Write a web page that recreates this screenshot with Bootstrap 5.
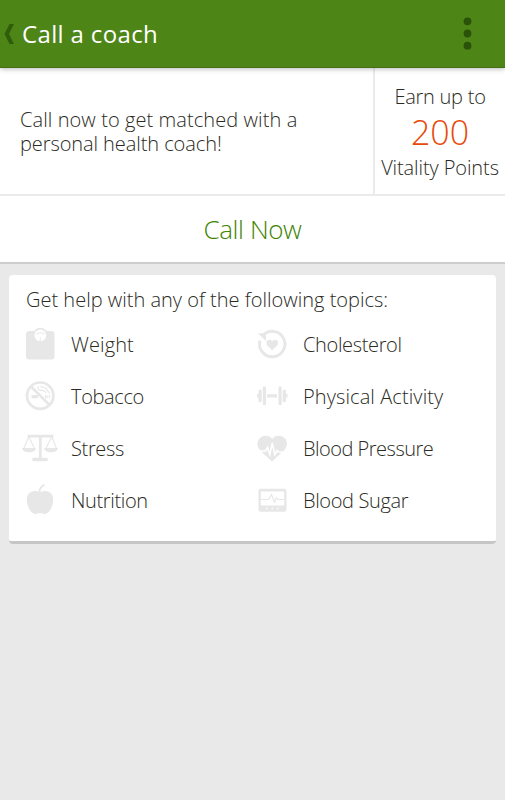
<!DOCTYPE html>
<html lang="en">
<head>
<meta charset="utf-8">
<meta name="viewport" content="width=device-width, initial-scale=1">
<title>Call a coach</title>
<link rel="stylesheet" href="https://cdn.jsdelivr.net/npm/bootstrap@5.3.0/dist/css/bootstrap.min.css">
<style>
body{background:#e9e9e9;color:#2b2b24;font-family:"Open Sans","Noto Sans",sans-serif;font-weight:300;font-size:20px;line-height:24px;min-height:100vh;overflow:hidden}
.app-bar{height:68px;background:#4e8517;color:#fff;border-bottom:1px solid #427013;box-shadow:0 1px 5px rgba(0,0,0,.28);position:relative;z-index:1}
.app-title{font-size:24px;font-weight:400;letter-spacing:.35px;line-height:32px;margin-left:7px}
.intro{height:128px;border-bottom:2px solid #ebebeb}
.intro-copy{padding:2px 0 0 20px}
.copy-a{font-size:20px;letter-spacing:.08px}
.copy-b{font-size:20px;letter-spacing:-.08px}
.copy-a,.copy-b,.points span{line-height:24px}
.points{width:132px;border-left:2px solid #ebebeb;padding-top:2px}
.points-a{letter-spacing:-.25px}
.points-b{letter-spacing:-.1px}
.points .points-num{color:#e84a0c;font-size:34px;line-height:47px}
.call-btn{height:68px;border-bottom:2px solid #cdcdcd;color:#3f8404;font-size:26px;font-weight:300;letter-spacing:-.4px}
.topics{margin:11px 9px 0;height:269px;border:0;border-bottom:3px solid #c6c6c6;border-radius:4px;color:inherit}
.topics-title{padding:13px 0 0 17px;height:43px;font-size:20px;font-weight:300;line-height:24px;margin:0}
.topic-grid{display:grid;grid-template-columns:232px 1fr;grid-auto-rows:52.25px;padding-left:13px}
.topic svg{width:36px;height:36px;margin-right:13px;flex:none;color:#e7e7e7}
.topic span{padding-top:1px}
.snug{letter-spacing:-.35px}
.snugger{letter-spacing:-.5px}
.airy{letter-spacing:.1px}
</style>
</head>
<body>
<header class="app-bar d-flex align-items-center">
  <a href="#" class="d-flex align-items-center text-reset text-decoration-none" aria-label="Back">
    <svg width="15" height="22" viewBox="0 0 15 22" fill="#315c0c"><path d="M9.500 1H14L9 11l5 10H9.500L4.500 11z"/></svg>
  </a>
  <h1 class="app-title mb-0">Call a coach</h1>
  <button class="btn p-0 border-0 ms-auto me-4 d-flex" aria-label="Menu">
    <svg width="27" height="34" viewBox="0 0 27 34" fill="#2b5209"><circle cx="13.500" cy="4.300" r="3.900"/><circle cx="13.500" cy="16.500" r="3.900"/><circle cx="13.500" cy="28.700" r="3.900"/></svg>
  </button>
</header>
<main>
  <section class="intro bg-white d-flex">
    <div class="intro-copy flex-grow-1 d-flex flex-column justify-content-center">
      <span class="copy-a">Call now to get matched with a</span>
      <span class="copy-b">personal health coach!</span>
    </div>
    <div class="points d-flex flex-column justify-content-center text-center text-nowrap">
      <span class="points-a">Earn up to</span>
      <span class="points-num">200</span>
      <span class="points-b">Vitality Points</span>
    </div>
  </section>
  <button class="call-btn btn bg-white rounded-0 border-top-0 border-start-0 border-end-0 w-100 p-0">Call Now</button>
  <section class="topics card">
    <h2 class="topics-title">Get help with any of the following topics:</h2>
    <div class="topic-grid">
      <div class="topic d-flex align-items-center">
        <svg viewBox="0 0 36 36" fill="currentColor"><rect x="4" y="5" width="28.500" height="28.500" rx="3"/><circle cx="18.300" cy="9.300" r="7.600"/><circle cx="18.300" cy="9.300" r="5.900" fill="#fff"/><path d="M14.300 8q4-2.600 8 0" fill="none" stroke="currentColor" stroke-width="1.300" stroke-dasharray="1.200 .6"/><path d="M17.600 14.800 18.300 10l.7 4.800z"/></svg>
        <span class="airy">Weight</span></div>
      <div class="topic d-flex align-items-center">
        <svg viewBox="0 0 36 36" fill="currentColor"><path d="M9.500 8.800A12.700 12.700 0 1 1 6 14.500" fill="none" stroke="currentColor" stroke-width="2.900"/><path d="M4 7.500 12 7v8z"/><path d="M18.200 24.200c-2-2-5.800-4.300-5.800-7.400 0-3.500 4.300-4.100 5.800-1.300 1.500-2.800 5.900-2.200 5.900 1.300 0 3.100-3.900 5.400-5.900 7.400z"/></svg>
        <span class="snug">Cholesterol</span></div>
      <div class="topic d-flex align-items-center">
        <svg viewBox="0 0 36 36" fill="none" stroke="currentColor"><circle cx="18.200" cy="17.700" r="13.200" stroke-width="2.700"/><path d="M9 8.500 27.500 27" stroke-width="2.600"/><path d="M9.500 18.700h6.500M23 18.700h1.500" stroke-width="3.200"/><path d="M25.800 17.200v3M27.700 17.200v3" stroke-width="1"/><path d="M16.500 8.200c-1.300 2.500.5 4.300 3 4.200 2.800-.2 3.300 1.600 5 2.200M18.500 8c1.500 2 4 1 5.500 2.300s.5 2.200 2.300 3.200 1 1.500 1 2.300" stroke-width="1.200"/></svg>
        <span class="snug">Tobacco</span></div>
      <div class="topic d-flex align-items-center">
        <svg viewBox="0 0 36 36" fill="currentColor"><path d="M13 16.200h10v3.200H13zM3 16h2v3.500H3zM31.500 16h2v3.500h-2z"/><rect x="4.500" y="11.500" width="3.200" height="12.800" rx="1.500"/><rect x="8.800" y="8.200" width="3.200" height="19" rx="1.500"/><rect x="24.500" y="8.200" width="3.200" height="19" rx="1.500"/><rect x="28.700" y="11.500" width="3.200" height="12.800" rx="1.500"/></svg>
        <span class="airy">Physical Activity</span></div>
      <div class="topic d-flex align-items-center">
        <svg viewBox="0 0 36 36" fill="currentColor"><path d="M5.500 3.800h26v2.600h-26zM16.900 5h2.800v22h-2.800z"/><path d="M6.700 5.500 1.800 17.500M6.700 5.500 12.500 17.500M29.800 5.500 24 17.500M29.800 5.500 34.500 17.500" fill="none" stroke="currentColor" stroke-width="1.100"/><path d="M0 17h14q-1 4.300-7 4.300T0 17zM22 17h14q-1 4.300-7 4.300T22 17z"/><rect x="10" y="26.800" width="16" height="3.400" rx="1.700"/></svg>
        <span class="snug">Stress</span></div>
      <div class="topic d-flex align-items-center">
        <svg viewBox="0 0 36 36" fill="currentColor"><path d="M18 30.500 7 20.500C-1 12 6 4.500 12 4.700c3 0 5 1.200 6.200 3.500 1.300-2.300 3.300-3.500 6.300-3.500C31 4.500 37 12 29.500 20z"/><path d="M3 20h8.500l2-3.500 2.400 7L18.300 12l2.500 11.500 2.200-4 1.200 1.500H34" fill="none" stroke="#fff" stroke-width="1.600"/></svg>
        <span class="snugger">Blood Pressure</span></div>
      <div class="topic d-flex align-items-center">
        <svg viewBox="0 0 36 36" fill="currentColor"><path d="M18 9.500c4-2.800 9-1.600 11.500 1.500 3.600 4.800 1 15.500-4.500 19.300-2.500 1.500-4.500-.3-7-.3s-4.500 1.800-7 .3C5.500 26.500 2.900 15.800 6.500 11 9 7.900 14 6.700 18 9.500z"/><path d="M17.500 9c0-2.800 1.800-5.500 4.300-7" fill="none" stroke="currentColor" stroke-width="2" stroke-linecap="round"/></svg>
        <span class="snug">Nutrition</span></div>
      <div class="topic d-flex align-items-center">
        <svg viewBox="0 0 36 36" fill="currentColor"><path fill-rule="evenodd" d="M6.500 5.700h24q2 0 2 2v19q0 2-2 2h-24q-2 0-2-2v-19q0-2 2-2zm.3 2.800v14h23.400v-14z"/><path d="M6.500 16.500h8l3-5 3 7.500 2-4 1.500 1.500h6.500" fill="none" stroke="currentColor" stroke-width="1.200"/><path d="M12 24.700h1.600v1.600H12zM17.600 24.700h1.600v1.600h-1.600zM23 24.700h1.600v1.600H23z" fill="#fff"/></svg>
        <span class="snug">Blood Sugar</span></div>
    </div>
  </section>
</main>
<script src="https://cdn.jsdelivr.net/npm/bootstrap@5.3.0/dist/js/bootstrap.bundle.min.js"></script>
</body>
</html>
